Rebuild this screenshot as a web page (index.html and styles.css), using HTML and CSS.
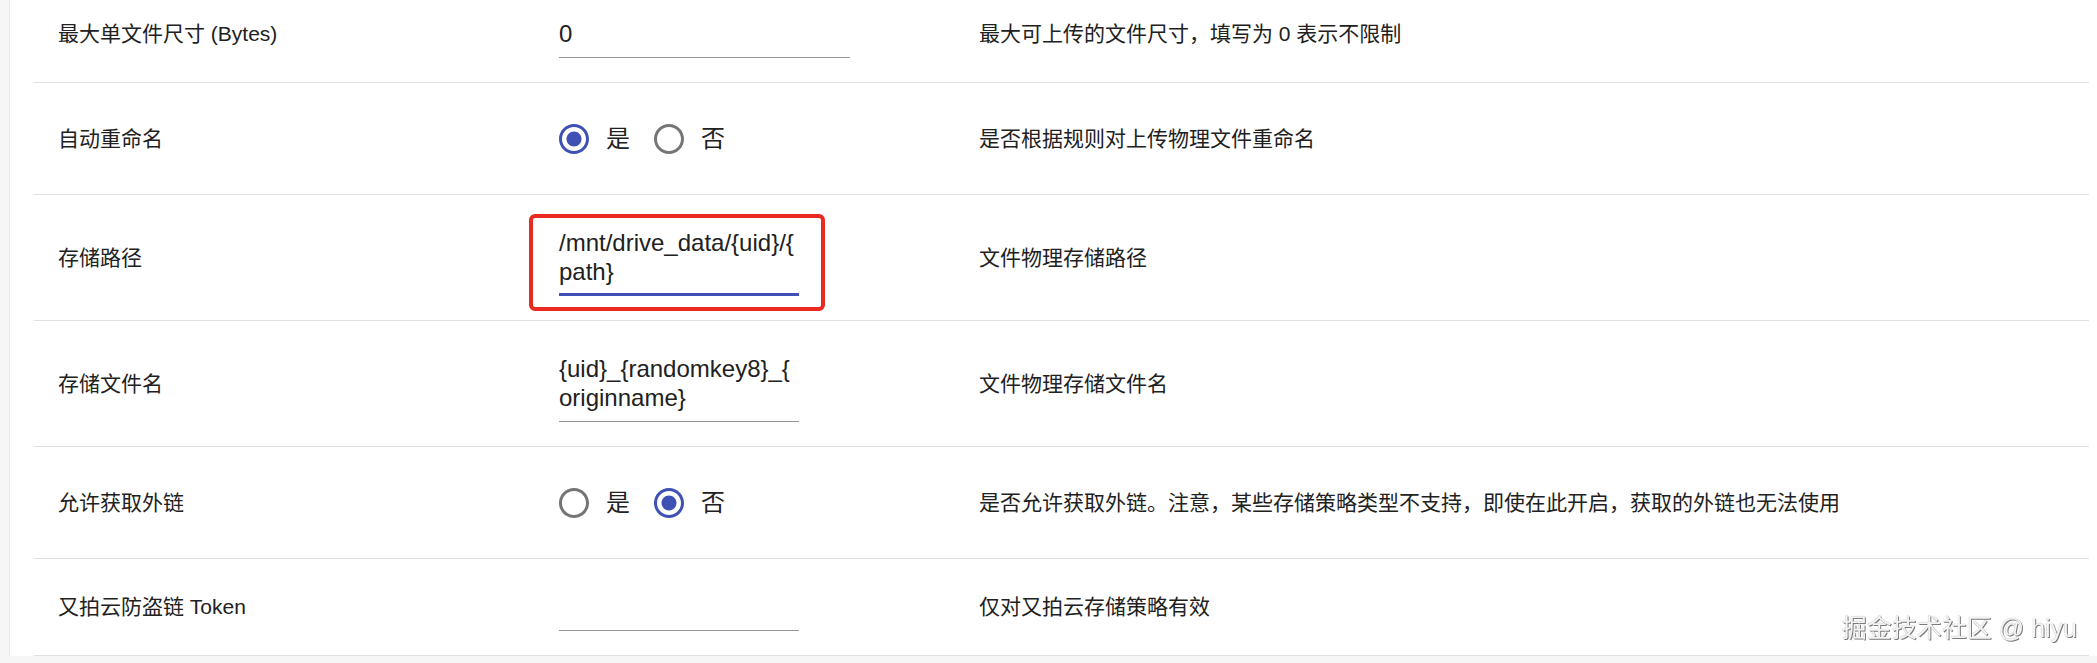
FILE: index.html
```html
<!DOCTYPE html>
<html lang="zh-CN">
<head>
    <meta charset="UTF-8">
    <meta name="viewport" content="width=device-width, initial-scale=1.0">
    <title>存储策略设置</title>
    <link rel="stylesheet" href="styles.css">
</head>
<body>
    <div class="page">
        <div class="settings">
            <div class="row">
                <div class="cell label">最大单文件尺寸 (Bytes)</div>
                <div class="cell">
                    <div class="field wide"><div class="field-input">0</div></div>
                </div>
                <div class="cell desc">最大可上传的文件尺寸，填写为 0 表示不限制</div>
            </div>

            <div class="row">
                <div class="cell label">自动重命名</div>
                <div class="cell">
                    <div class="radio-group">
                        <label class="radio checked">
                            <span class="radio-icon">
                                <svg viewBox="0 0 24 24" width="36" height="36"><path d="M12 2C6.48 2 2 6.48 2 12s4.48 10 10 10 10-4.48 10-10S17.52 2 12 2zm0 18c-4.42 0-8-3.58-8-8s3.58-8 8-8 8 3.58 8 8-3.58 8-8 8z"/><path d="M12 7c-2.76 0-5 2.24-5 5s2.24 5 5 5 5-2.24 5-5-2.24-5-5-5z"/></svg>
                            </span>
                            <span class="radio-text">是</span>
                        </label>
                        <label class="radio">
                            <span class="radio-icon">
                                <svg viewBox="0 0 24 24" width="36" height="36"><path d="M12 2C6.48 2 2 6.48 2 12s4.48 10 10 10 10-4.48 10-10S17.52 2 12 2zm0 18c-4.42 0-8-3.58-8-8s3.58-8 8-8 8 3.58 8 8-3.58 8-8 8z"/></svg>
                            </span>
                            <span class="radio-text">否</span>
                        </label>
                    </div>
                </div>
                <div class="cell desc">是否根据规则对上传物理文件重命名</div>
            </div>

            <div class="row">
                <div class="cell label">存储路径</div>
                <div class="cell">
                    <div class="field focused">
                        <div class="field-input">/mnt/drive_data/{uid}/{path}</div>
                        <div class="mark"></div>
                    </div>
                </div>
                <div class="cell desc">文件物理存储路径</div>
            </div>

            <div class="row">
                <div class="cell label">存储文件名</div>
                <div class="cell">
                    <div class="field"><div class="field-input">{uid}_{randomkey8}_{originname}</div></div>
                </div>
                <div class="cell desc">文件物理存储文件名</div>
            </div>

            <div class="row">
                <div class="cell label">允许获取外链</div>
                <div class="cell">
                    <div class="radio-group">
                        <label class="radio">
                            <span class="radio-icon">
                                <svg viewBox="0 0 24 24" width="36" height="36"><path d="M12 2C6.48 2 2 6.48 2 12s4.48 10 10 10 10-4.48 10-10S17.52 2 12 2zm0 18c-4.42 0-8-3.58-8-8s3.58-8 8-8 8 3.58 8 8-3.58 8-8 8z"/></svg>
                            </span>
                            <span class="radio-text">是</span>
                        </label>
                        <label class="radio checked">
                            <span class="radio-icon">
                                <svg viewBox="0 0 24 24" width="36" height="36"><path d="M12 2C6.48 2 2 6.48 2 12s4.48 10 10 10 10-4.48 10-10S17.52 2 12 2zm0 18c-4.42 0-8-3.58-8-8s3.58-8 8-8 8 3.58 8 8-3.58 8-8 8z"/><path d="M12 7c-2.76 0-5 2.24-5 5s2.24 5 5 5 5-2.24 5-5-2.24-5-5-5z"/></svg>
                            </span>
                            <span class="radio-text">否</span>
                        </label>
                    </div>
                </div>
                <div class="cell desc">是否允许获取外链。注意，某些存储策略类型不支持，即使在此开启，获取的外链也无法使用</div>
            </div>

            <div class="row">
                <div class="cell label">又拍云防盗链 Token</div>
                <div class="cell">
                    <div class="field"><div class="field-input"></div></div>
                </div>
                <div class="cell desc">仅对又拍云存储策略有效</div>
            </div>
        </div>

        <div class="watermark">掘金技术社区 @ hiyu</div>
    </div>
</body>
</html>
```

FILE: styles.css
```css
html, body {
    margin: 0;
    padding: 0;
}
body {
    background-color: #f6f6f6;
    font-family: "Liberation Sans", "Noto Sans CJK SC", sans-serif;
    color: #212121;
    overflow: hidden;
}
.page {
    margin-left: 9px;
    min-height: 663px;
    background: white;
    border-left: 1px solid #e6e6e6;
}
.settings {
    margin: -14px 8px 0 24px;
}
.row {
    display: grid;
    grid-template-columns: 501px 420px 1fr;
    align-items: center;
    padding: 24px 0;
    border-bottom: 1px solid #e0e0e0;
}
.cell {
    padding-left: 24px;
    box-sizing: border-box;
}
.label, .desc {
    font-size: 21px;
    line-height: 30px;
}

/* text fields */
.field {
    position: relative;
    width: 240px;
    border-bottom: 1px solid #949494;
    padding: 9px 0 9px;
}
.field.wide {
    width: 291px;
}
.field.focused {
    border-bottom: 3px solid #3f51b5;
    padding-bottom: 7px;
}
.field-input {
    min-height: 29px;
    font-size: 24px;
    line-height: 29px;
    word-break: break-all;
    line-break: anywhere;
}
.mark {
    position: absolute;
    left: -30px;
    top: -5px;
    width: 296px;
    height: 97px;
    box-sizing: border-box;
    border: 4px solid #ea2a20;
    border-radius: 6px;
}

/* radios */
.radio-group {
    display: flex;
    align-items: center;
    height: 63px;
}
.radio {
    display: flex;
    align-items: center;
    margin-right: 21px;
}
.radio-icon {
    display: flex;
    width: 36px;
    height: 36px;
    margin-left: -3px;
    fill: #757575;
}
.radio + .radio .radio-icon {
    margin-left: 0;
}
.radio.checked .radio-icon {
    fill: #3f51b5;
}
.radio-text {
    margin-left: 14px;
    font-size: 24px;
    line-height: 29px;
}

.watermark {
    position: fixed;
    right: 20px;
    top: 614px;
    font-size: 25px;
    line-height: 28px;
    color: #f4f4f4;
    text-shadow: 1px 1px 0 #7a7a7a, 0 0 1px #9a9a9a;
}
```
